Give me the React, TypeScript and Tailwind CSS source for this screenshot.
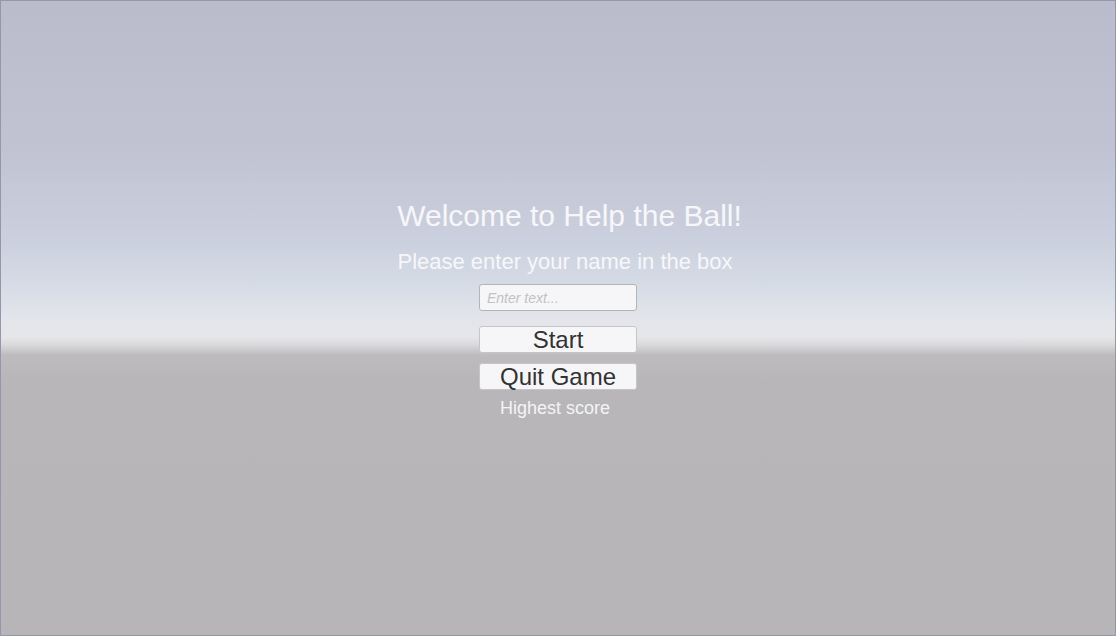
export default function App() {
  return (
    <div
      className="w-[1116px] h-[636px] border border-[#9696aa] flex flex-col items-center pt-[198px] bg-[linear-gradient(to_bottom,#bbbccb_0px,#c1c3d2_150px,#cbd0de_240px,#d6dce6_285px,#e3e5ea_318px,#e6e6ea_336px,#d9d8db_344px,#bdbbbd_354px,#b8b6b8_380px,#b7b5b7_636px)]"
      style={{ fontFamily: '"Liberation Sans", Arial, sans-serif' }}
    >
      <h1 className="ml-[23px] text-[30px] leading-[34px] text-[#f7f7fa]">Welcome to Help the Ball!</h1>
      <p className="ml-[14px] mt-[16px] text-[22px] leading-[26px] text-[#f7f7fa]">Please enter your name in the box</p>
      <input
        type="text"
        placeholder="Enter text..."
        className="mt-[9px] w-[158px] h-[27px] rounded-[3px] border border-[#b4b3b8] bg-[#f6f5f7] px-[7px] text-[14px] italic text-[#333] placeholder:text-[#c2c1c6] focus:outline-none"
      />
      <button className="mt-[15px] w-[158px] h-[27px] rounded-[3px] border border-[#c6c5ca] bg-[#f6f6f8] text-[24px] leading-[26px] text-[#323232]">
        Start
      </button>
      <button className="mt-[10px] w-[158px] h-[27px] rounded-[3px] border border-[#c6c5ca] bg-[#f6f6f8] text-[24px] leading-[26px] text-[#323232]">
        Quit Game
      </button>
      <p className="mt-[7px] -ml-[6px] text-[18px] leading-[22px] text-[#f4f4f6]">Highest score</p>
    </div>
  );
}
